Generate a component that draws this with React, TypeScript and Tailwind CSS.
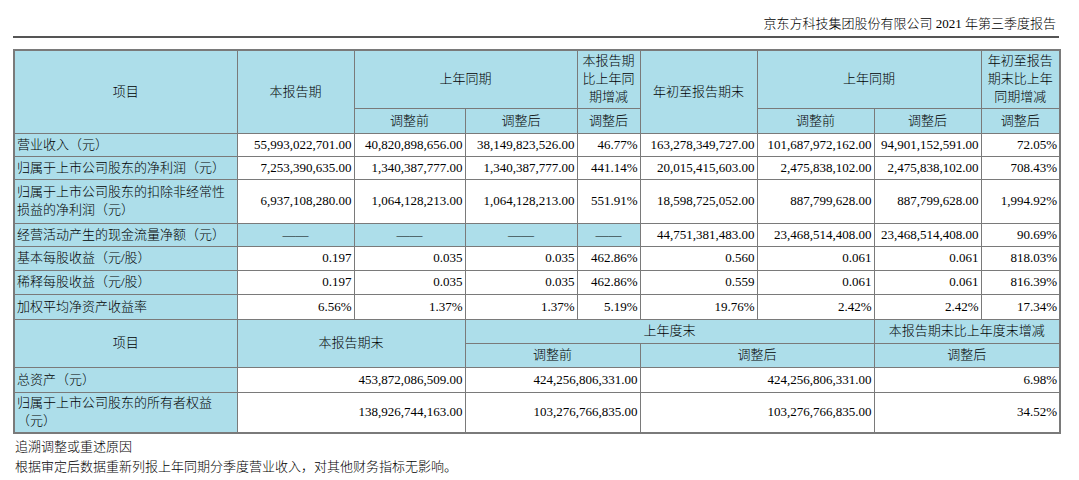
const cell = 'border border-[#7a7a7a] px-[2px] text-[13px] leading-[18px] text-black';
const head = `${cell} bg-[#addeea] text-center align-middle font-light`;
const label = `${cell} bg-[#addeea] text-left align-middle`;
const num = `${cell} bg-white text-right align-middle whitespace-nowrap`;
const dash = `${cell} bg-[#addeea] text-center align-middle`;

type Row = { label: React.ReactNode; values: string[]; dashes?: number; h: string };

const rows: Row[] = [
  {
    label: '营业收入（元）',
    values: ['55,993,022,701.00', '40,820,898,656.00', '38,149,823,526.00', '46.77%', '163,278,349,727.00', '101,687,972,162.00', '94,901,152,591.00', '72.05%'],
    h: 'h-[23px]',
  },
  {
    label: '归属于上市公司股东的净利润（元）',
    values: ['7,253,390,635.00', '1,340,387,777.00', '1,340,387,777.00', '441.14%', '20,015,415,603.00', '2,475,838,102.00', '2,475,838,102.00', '708.43%'],
    h: 'h-[23px]',
  },
  {
    label: (
      <>
        归属于上市公司股东的扣除非经常性
        <br />
        损益的净利润（元）
      </>
    ),
    values: ['6,937,108,280.00', '1,064,128,213.00', '1,064,128,213.00', '551.91%', '18,598,725,052.00', '887,799,628.00', '887,799,628.00', '1,994.92%'],
    h: 'h-[44px]',
  },
  {
    label: '经营活动产生的现金流量净额（元）',
    values: ['——', '——', '——', '——', '44,751,381,483.00', '23,468,514,408.00', '23,468,514,408.00', '90.69%'],
    dashes: 4,
    h: 'h-[23px]',
  },
  {
    label: '基本每股收益（元/股）',
    values: ['0.197', '0.035', '0.035', '462.86%', '0.560', '0.061', '0.061', '818.03%'],
    h: 'h-[24px]',
  },
  {
    label: '稀释每股收益（元/股）',
    values: ['0.197', '0.035', '0.035', '462.86%', '0.559', '0.061', '0.061', '816.39%'],
    h: 'h-[24px]',
  },
  {
    label: '加权平均净资产收益率',
    values: ['6.56%', '1.37%', '1.37%', '5.19%', '19.76%', '2.42%', '2.42%', '17.34%'],
    h: 'h-[25px]',
  },
];

export default function App() {
  return (
    <div className="w-[1079px] h-[480px] bg-white overflow-hidden font-['Liberation_Serif','Noto_Sans_CJK_SC',serif] font-light text-black">
      {/* 页眉 */}
      <div className="ml-[13px] w-[1046px] h-[38px] border-b-2 border-[#555] flex items-end justify-end pb-[3px] pr-[3px]">
        <span className="text-[13px] leading-[18px]">京东方科技集团股份有限公司 2021 年第三季度报告</span>
      </div>

      <table className="mt-[11px] ml-[13px] w-[1046px] table-fixed border-collapse border-2 border-[#7a7a7a]">
        <colgroup>
          <col className="w-[223px]" />
          <col className="w-[117px]" />
          <col className="w-[111px]" />
          <col className="w-[112px]" />
          <col className="w-[63px]" />
          <col className="w-[117px]" />
          <col className="w-[117px]" />
          <col className="w-[107px]" />
          <col className="w-[79px]" />
        </colgroup>
        <tbody>
          {/* 表头 */}
          <tr className="h-[58px]">
            <td rowSpan={2} className={head}>项目</td>
            <td rowSpan={2} className={head}>本报告期</td>
            <td colSpan={2} className={head}>上年同期</td>
            <td className={head}>
              本报告期
              <br />
              比上年同
              <br />
              期增减
            </td>
            <td rowSpan={2} className={head}>年初至报告期末</td>
            <td colSpan={2} className={head}>上年同期</td>
            <td className={head}>
              年初至报告
              <br />
              期末比上年
              <br />
              同期增减
            </td>
          </tr>
          <tr className="h-[25px]">
            <td className={head}>调整前</td>
            <td className={head}>调整后</td>
            <td className={head}>调整后</td>
            <td className={head}>调整前</td>
            <td className={head}>调整后</td>
            <td className={head}>调整后</td>
          </tr>

          {rows.map((r, i) => (
            <tr key={i} className={r.h}>
              <td className={label}>{r.label}</td>
              {r.values.map((v, j) => (
                <td key={j} className={r.dashes && j < r.dashes ? dash : num}>
                  {v}
                </td>
              ))}
            </tr>
          ))}

          {/* 资产部分 */}
          <tr className="h-[24px]">
            <td rowSpan={2} className={head}>项目</td>
            <td rowSpan={2} colSpan={2} className={head}>本报告期末</td>
            <td colSpan={4} className={head}>上年度末</td>
            <td colSpan={2} className={head}>本报告期末比上年度末增减</td>
          </tr>
          <tr className="h-[24px]">
            <td colSpan={2} className={head}>调整前</td>
            <td colSpan={2} className={head}>调整后</td>
            <td colSpan={2} className={head}>调整后</td>
          </tr>
          <tr className="h-[25px]">
            <td className={label}>总资产（元）</td>
            <td colSpan={2} className={num}>453,872,086,509.00</td>
            <td colSpan={2} className={num}>424,256,806,331.00</td>
            <td colSpan={2} className={num}>424,256,806,331.00</td>
            <td colSpan={2} className={num}>6.98%</td>
          </tr>
          <tr className="h-[41px]">
            <td className={label}>
              归属于上市公司股东的所有者权益
              <br />
              （元）
            </td>
            <td colSpan={2} className={num}>138,926,744,163.00</td>
            <td colSpan={2} className={num}>103,276,766,835.00</td>
            <td colSpan={2} className={num}>103,276,766,835.00</td>
            <td colSpan={2} className={num}>34.52%</td>
          </tr>
        </tbody>
      </table>

      {/* 说明 */}
      <div className="ml-[15px] mt-[3px] text-[13px] leading-[20px]">
        <p>追溯调整或重述原因</p>
        <p>根据审定后数据重新列报上年同期分季度营业收入，对其他财务指标无影响。</p>
      </div>
    </div>
  );
}
